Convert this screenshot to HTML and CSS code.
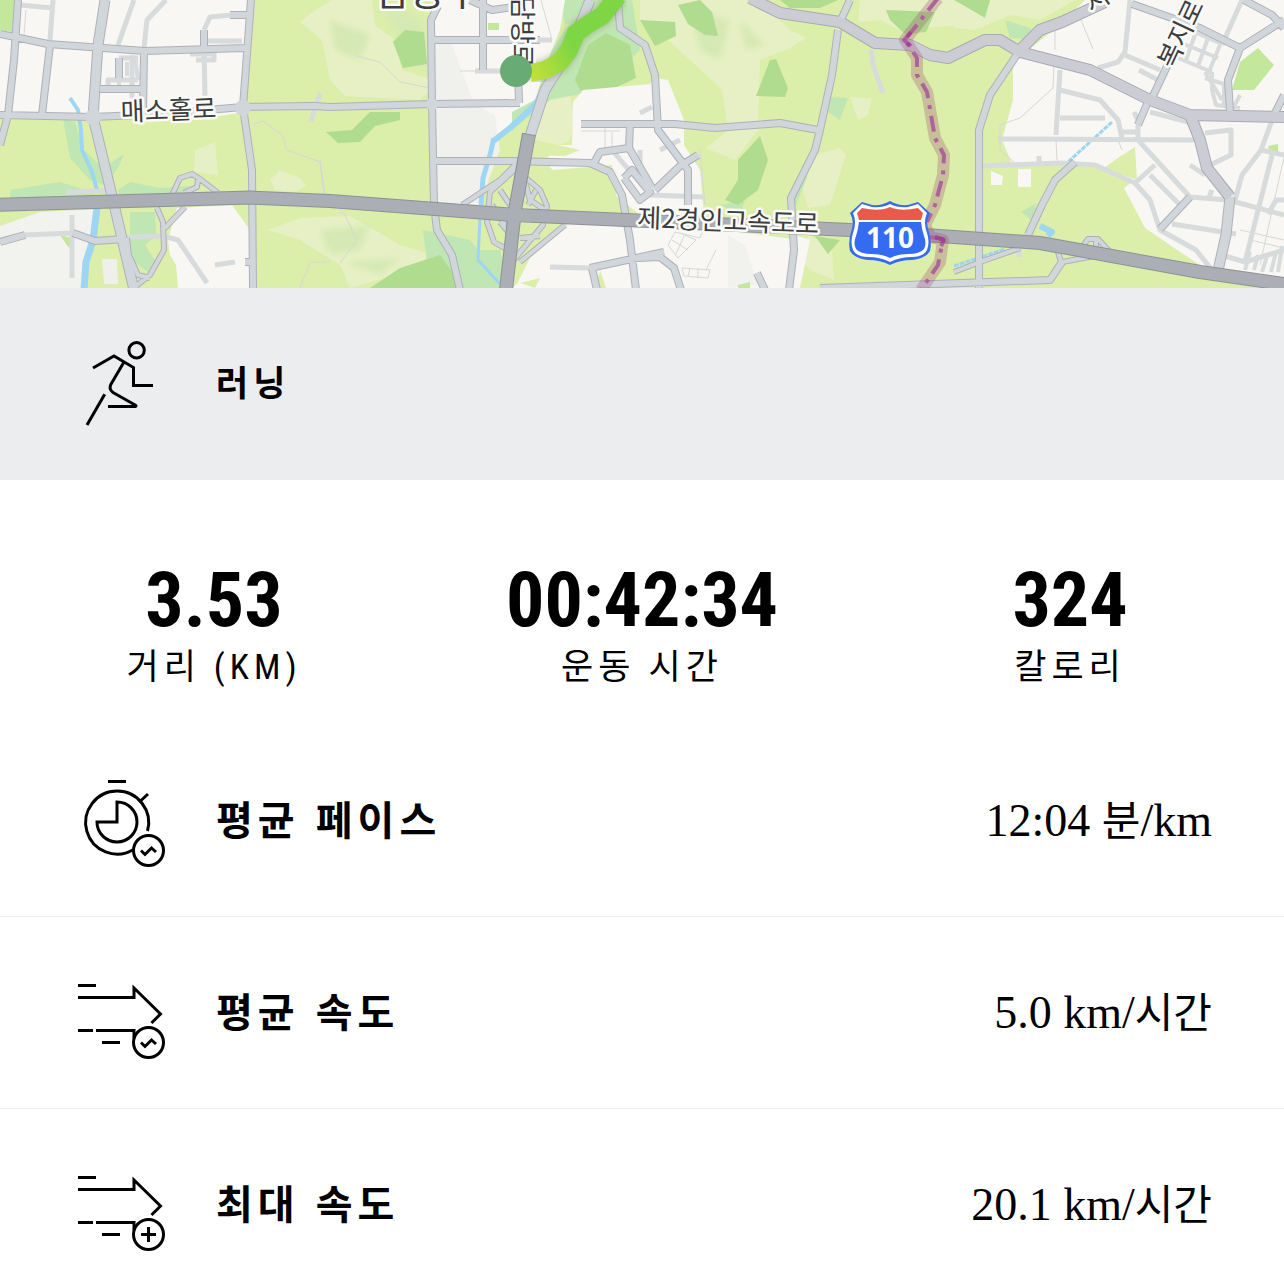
FILE: index.html
```html
<!DOCTYPE html>
<html lang="ko">
<head>
  <meta charset="UTF-8">
  <meta name="viewport" content="width=device-width, initial-scale=1.0">
  <title>러닝</title>
  <link rel="stylesheet" href="styles.css">
</head>
<body>
  <svg class="map" viewBox="0 0 1284 288" preserveAspectRatio="xMidYMid slice" role="img" aria-label="지도">
    <defs>
      <linearGradient id="route" gradientUnits="userSpaceOnUse" x1="530" y1="74" x2="574" y2="50">
        <stop offset="0" stop-color="#c3e03c"/>
        <stop offset="0.4" stop-color="#a9dc3c"/>
        <stop offset="1" stop-color="#7ed644"/>
      </linearGradient>
      <filter id="soft" x="-10%" y="-10%" width="120%" height="120%">
        <feGaussianBlur stdDeviation="3"/>
      </filter>
      <path id="streets" d="M0 34L48 44L145 51L245 48M18 0L14 60L8 115L0 145M50 45L42 115M0 115L93 117L160 114L243 107L315 106L330 107L432 104L520 103M251 0L243 107L252 170L253 288M144 51L143 112M100 89L142 89M0 242L25 235M73 233L95 241L125 239M230 15L247 15M204 30L204 50M119 58L119 78M245 262L252 262
        M438 6L431 20L432 104L434 205L437 230L452 255L460 290M434 40L540 40M483 0L483 70M470 0L492 10L520 6M518 71L519 103M434 161L512 161L590 163L610 172L622 195L630 240L636 290M581 124L665 124M665 124L675 124L715 128L780 123L818 130M630 124L629 148L600 152L594 163M629 148L652 188M618 0L620 28L645 45L655 75L658 130L688 170L688 205M655 190L680 166L698 155M624 178L632 170L650 192L640 200L624 178
        M590 268L650 255L664 252M592 268L597 290M638 258L660 257L674 268L681 290M838 30L832 75L820 130L815 150L791 198L794 250L789 290M757 273L765 290M820 288L1050 280L1062 262M850 0L840 22
        M1020 50L990 95L979 130L979 290M1075 162L1055 180L1042 205L1028 235M1132 4L1200 28L1240 48L1284 20M1240 48L1228 80L1230 112M1170 60L1152 98M1147 104L1138 125M1284 95L1274 115M1190 197L1160 229M1244 0L1272 15L1284 28"/>
      <path id="lanes" d="M20 5L52 8M53 0L50 40M134 0L118 45M166 0L147 20L144 48M204 48L205 98M204 30L210 17L232 15M208 41L242 41M190 54L214 54L214 60L196 60M132 55L132 98M119 58L138 58M108 88L108 80L138 80M25 235L73 233M72 215L72 278M127 237L163 236L178 240L207 283M215 265L235 262M320 93L311 121M66 192L108 191
        M475 71L518 71M525 40L552 40M550 267L590 268M640 113L652 107M612 150L650 195L704 197M871 50L873 65L883 93M640 170L640 150M660 150L680 140
        M982 166L1060 163L1095 165L1135 183L1150 200L1160 230L1196 250L1216 275M998 139L1200 140M1060 70L1056 135M1060 90L1100 100L1118 120L1122 138M1060 118L1105 118M1130 0L1125 52L1118 62L1098 68M1136 6L1200 28M1242 0L1222 45M1138 125L1138 140L1190 197L1228 200L1284 215M1172 224L1236 234M1150 175L1184 209M1136 182L1155 165M1125 55L1160 70M1205 133L1231 130L1231 155L1210 165M1150 112L1200 125M1265 115L1274 115L1261 150L1242 175L1235 200M1261 150L1284 155M1272 155L1245 262M1284 200L1276 200L1268 214M1190 165L1205 175M1139 70L1158 80M1122 132L1138 132M1134 112L1140 125M1039 156L1039 165M1019 248L1019 257M1225 256L1245 262L1284 250M1212 190L1208 200"/>
      <path id="blocks" d="M1190 30L1222 44M1184 44L1218 58M1178 58L1212 72M1196 32L1186 60M1208 38L1198 66M1220 45L1208 74M1205 72L1222 100M1212 72L1212 90L1216 105L1240 108M1240 95L1232 110M1250 252L1245 270M1258 255L1254 270M1267 256L1262 272M1276 252L1271 272M1282 246L1278 272M1205 78L1224 84L1224 108M119 60L119 85M135 57L138 80M127 62L127 76"/>
      <path id="ramps" d="M157 208L163 222L164 250L150 275L136 286M185 207L165 228M172 195L180 178L192 174L200 179L218 193M198 180L197 187L184 193M127 238L129 255L138 275L150 278
        M462 205L500 180L520 160M520 165L490 192L487 222L494 242L508 250M500 190L510 205M492 205L505 225M526 178L540 190L547 206L543 225L512 262M536 190L528 205M526 185L530 200L545 210M565 225L520 262M500 222L515 240M520 238L540 236
        M1062 262L1100 255M1058 252L1062 265M1080 250L1088 239L1098 239L1110 252M1096 240L1096 250M954 272L980 262L1020 248"/>
      <path id="mains" d="M750 -2L780 13L840 22L875 43L910 45L930 55L948 58L985 40L1000 40L1020 52L1090 70L1150 100L1190 115L1284 117M1020 50L1040 30L1062 22L1105 2M1190 115L1200 140L1207 168L1230 197"/>
      <path id="trunks" d="M105 0L98 45L93 117L113 200L134 290M590 0L582 20L565 58L545 90L530 136M1230 197L1226 235L1217 275"/>
      <path id="highway" d="M-5 205L250 197.500L330 201L515 215L850 230L954 237L1040 243L1200 272L1290 285"/>
    </defs>

    <rect width="1284" height="288" fill="#dbeeaa"/>

    <!-- hills -->
    <g fill="#e7f0c4">
      <path d="M300 22L315 10L332 0L372 0L375 25L395 40L402 70L440 82L420 100L345 96L330 80L322 40Z"/>
      <path d="M270 180L280 170L300 178L306 185L296 192L275 190Z"/>
      <path d="M268 230L300 218L350 216L400 245L434 255L420 268L360 285L350 288L340 265L300 240Z"/>
      <path d="M195 150L215 142L218 175L194 172Z"/>
      <path d="M540 92L570 95L574 120L570 140L545 152L534 140Z"/>
      <path d="M640 0L760 0L790 30L806 38L790 48L760 60L758 130L735 160L706 148L728 130L722 90L690 60L668 40L640 20Z"/>
      <path d="M815 155L840 148L846 155L830 205L808 208L800 180Z"/>
      <path d="M850 97L872 98L868 115L858 120Z"/>
      <path d="M860 0L960 0L962 25L900 30L880 20L858 22Z"/>
      <path d="M810 235L832 250L834 280L810 270L792 250Z"/>
      <path d="M954 0L1075 0L1040 20L1010 15L975 30L954 28Z"/>
    </g>
    <g fill="#d5e9b4" filter="url(#soft)">
      <path d="M330 20L370 35L360 60L335 50ZM380 0L420 20L432 70L410 60ZM690 10L730 20L720 60L700 50Z"/>
      <path d="M320 230L370 225L360 250L330 255ZM345 262L400 258L380 275ZM740 20L765 45L745 50Z"/>
    </g>

    <!-- woods -->
    <g fill="#c0e6b3">
      <path d="M63 118L75 122L84 150L103 168L124 154L118 168L105 185L90 180L70 158Z"/>
      <path d="M10 190L60 182L92 192L100 198L10 198ZM118 190L130 182L160 188L190 186L170 202L120 200Z"/>
      <path d="M130 212L155 212L156 235L145 245L156 262L148 272L134 262L130 245Z"/>
      <path d="M423 230L470 240L478 250L500 250L510 288L430 288Z"/>
      <path d="M565 30L590 0L632 0L640 50L600 90L550 100L512 130L512 112Z"/>
      <path d="M560 0L585 0L578 20L565 25ZM828 97L848 98L840 120L828 112ZM808 175L796 205L792 195ZM1005 20L1030 28L1040 40L1010 38Z"/>
      <path d="M1021 212L1036 203L1034 222ZM720 205L745 200L740 215Z"/>
    </g>
    <g fill="#b0dc8f">
      <path d="M393 42L405 30L424 32L427 64L403 68Z"/>
      <path d="M326 132L352 130L370 112L400 112L400 120L375 126L360 142L338 143Z"/>
      <path d="M370 288L400 268L440 255L458 280L460 288Z"/>
      <path d="M575 80L588 45L606 33L630 45L636 78L600 95L580 90Z"/>
      <path d="M678 5L700 0L712 12L718 36L705 35L688 24ZM640 20L675 22L676 36L655 46Z"/>
      <path d="M770 60L776 59L788 88L785 97L756 96ZM738 160L760 136L768 160L758 190L738 205L725 200L738 180Z"/>
      <path d="M780 0L838 0L820 8L790 8ZM886 10L935 12L926 32L905 34L890 20ZM954 0L990 0L985 18L975 12ZM815 236L840 240L828 254Z"/>
    </g>

    <!-- built-up land -->
    <g fill="#f8f7f3">
      <path d="M0 0L251 0L246 112L205 118L150 119L93 119L75 112L72 95L85 80L95 82L95 115L0 117Z"/>
      <path d="M0 226L40 212L96 209L92 250L82 288L0 288Z" fill="#f2f2ee"/>
      <path d="M177 208L232 205L250 230L251 288L178 288L176 265L170 255L168 240Z"/>
      <path d="M102 259L117 259L118 284L104 284Z" fill="#f0f0ea"/>
      <path d="M434 0L565 0L560 30L548 60L535 100L512 112L512 128L486 150L482 205L434 203Z"/>
      <path d="M434 40L450 40L474 103L495 115L500 150L480 203L434 203Z" fill="#f0f1ed"/>
      <path d="M583 90L650 84L654 78L668 80L684 120L684 145L700 170L704 215L640 215L615 195L612 168L560 180L545 160L560 145L572 145L573 102Z"/>
      <path d="M570 222L640 226L740 232L800 240L797 288L515 288L530 258Z"/>
      <path d="M728 235L745 245L758 285L728 288Z" fill="#f1f1ed"/>
      <path d="M1013 62L1060 25L1085 0L1284 0L1284 278L1204 268L1170 245L1145 228L1124 188L1132 182L1095 166L1012 164L1002 140L1013 100Z"/>
      <path d="M991 171L1003 176L1002 185L991 185ZM1018 169L1031 169L1031 187L1018 187Z"/>
      <path d="M795 235L810 240L800 288L785 288ZM512 288L540 265L560 288Z"/>
    </g>
    <g fill="#dbeeaa">
      <path d="M530 172L612 165L618 208L555 207Z"/>
      <path d="M1135 147L1137 180L1104 168L1118 158Z"/>
      <path d="M535 140L580 150L565 156L535 155Z"/>
      <path d="M600 270L606 288L596 288ZM520 283L540 278L535 288Z"/>
    </g>
    <g fill="#c3e79b">
      <path d="M0 0L15 0L12 32L0 30ZM1258 48L1274 65L1254 90L1232 90L1240 62Z"/>
      <path d="M60 235L72 238L69 248ZM488 23L499 23L499 30L488 30ZM1268 146L1278 144L1278 152L1270 153ZM738 285L750 282L750 288L738 288Z"/>
    </g>

    <!-- water -->
    <g fill="none" stroke="#9dd6f3" stroke-linejoin="round">
      <path d="M70 98L78 110L81 130L82 150L92 172L97 190" stroke-width="4"/>
      <path d="M97 208L93 240L86 262L84 290" stroke-width="7"/>
      <path d="M552 76L535 105L510 128L492 142" stroke-width="6"/>
      <path d="M494 138L490 155L483 178L481 205" stroke-width="5"/>
      <path d="M480 218L478 260L500 284" stroke-width="3"/>
      <path d="M1112 122L1068 162M954 266L1005 249" stroke-width="3" stroke-dasharray="5 1"/>
      <path d="M1040 226L1052 232L1048 236" stroke-width="6"/>
    </g>

    <!-- footpaths and tracks -->
    <g fill="none" stroke="#d5d8d8" stroke-width="1">
      <path d="M253 125L263 121L282 135L287 150L320 162L324 195M300 288L310 262L330 262M357 56L380 62L400 82L430 88M320 160L325 195L345 215L357 240L340 263M26 10L24 35M541 0L552 40M605 125L605 148M612 132L612 148M581 131L620 131M460 71L475 71"/>
      <path d="M1054 65L1053 88L1020 118L1000 125L1000 150L1015 163M1055 20L1055 50M1081 20L1093 49M1056 140L1057 160M1118 140L1122 150M1284 157L1260 265M1250 240L1284 248M1240 230L1284 240M700 150L705 205"/>
      <path d="M668 245L675 232L700 238L704 228M668 245L678 258L696 240L680 233M672 240L688 250M684 236L676 254M682 268L710 270L708 278L684 276ZM690 268L688 277M698 268L698 278M706 270L716 250"/>
    </g>

    <!-- roads -->
    <g fill="none" stroke-linejoin="round">
      <use href="#lanes" stroke="#d7dbdc" stroke-width="5"/>
      <use href="#blocks" stroke="#d7dbdc" stroke-width="4"/>
      <use href="#ramps" stroke="#adb1ba" stroke-width="6"/>
      <use href="#streets" stroke="#adb1ba" stroke-width="8"/>
      <use href="#trunks" stroke="#adb1ba" stroke-width="11"/>
      <use href="#mains" stroke="#a9aab5" stroke-width="12"/>
      <use href="#ramps" stroke="#d2d5da" stroke-width="4"/>
      <use href="#streets" stroke="#d1d6da" stroke-width="6"/>
      <use href="#trunks" stroke="#d1d6da" stroke-width="9"/>
      <use href="#mains" stroke="#cccdd4" stroke-width="10"/>
      <g fill="#d1d6da" stroke="none">
        <circle cx="93" cy="117" r="8"/>
        <circle cx="243" cy="108" r="8"/>
        <circle cx="432" cy="104" r="6"/>
      </g>
      <path d="M529 134L515 210L506 290" stroke="#8d9198" stroke-width="14"/>
      <use href="#highway" stroke="#8d9198" stroke-width="14"/>
      <path d="M529 135L515 210L506 290M500 214L530 216" stroke="#abaeb4" stroke-width="12"/>
      <use href="#highway" stroke="#abaeb4" stroke-width="12"/>
    </g>

    <!-- district border -->
    <g fill="none" stroke-linejoin="round">
      <path d="M938 -2L905 40L917 58L917 75L927 92L935 138L944 155L943 175L935 205L925 225L930 237L943 240L940 262L921 290" stroke="#9b4f78" stroke-opacity="0.3" stroke-width="12"/>
      <path d="M938 -2L905 40L917 58L917 75L927 92L935 138L944 155L943 175L935 205L927 222M930 237L943 239L938 265L921 290" stroke="#ad6599" stroke-width="4" stroke-dasharray="16 7 4 7"/>
      <path d="M911 32L904 40L911 46M935 237L944 240L941 246" stroke="#9c2b91" stroke-opacity="0.6" stroke-width="4"/>
    </g>

    <!-- route -->
    <path d="M530 74L545 70L560 62L569 50L576 33L590 23L602 16L618 -4" fill="none" stroke="#6d7d55" stroke-opacity="0.4" stroke-width="20" filter="url(#soft)"/>

    <g class="map-label">
      <text x="375" y="5" font-size="38">남동구</text>
      <text x="121" y="121" font-size="26" transform="rotate(-2 121 121)">매소홀로</text>
      <text x="637" y="227" font-size="26" transform="rotate(2 637 227)">제2경인고속도로</text>
      <text x="513" y="-4" font-size="26" transform="rotate(90 513 -4)">담방로</text>
      <text x="1174" y="70" font-size="26" transform="rotate(-65 1174 70)">복지로</text>
      <text x="1092" y="14" font-size="26" transform="rotate(-35 1092 14)">서</text>
    </g>

    <path d="M530 73L545 70L560 62L569 50L576 33L590 23L602 16L618 -4" fill="none" stroke="url(#route)" stroke-width="18" stroke-linejoin="round"/>
    <circle cx="516" cy="71" r="16" fill="#68ab75"/>

    <!-- route 110 shield -->
    <path d="M862 202L872 205Q882 206 890 201Q898 206 908 205L918 202L930 213Q925 222 929 232Q932 242 930 251Q925 259 912 260Q900 260 890 265Q880 260 868 260Q855 259 850 251Q848 242 851 232Q855 222 850 213Z" fill="#346bf0"/>
    <path d="M862 204L872 207Q882 208 890 204Q898 208 908 207L918 204L927 213Q923 222 927 233Q930 242 927 250Q923 257 912 257Q900 257 890 262Q880 257 868 257Q857 257 853 250Q850 242 853 233Q857 222 853 213Z" fill="#fff"/>
    <path d="M859 222H921Q922 230 924 236Q927 244 924 249Q920 254 908 254Q898 254 890 258Q882 254 872 254Q860 254 856 249Q853 244 856 236Q858 230 859 222Z" fill="#346bf0"/>
    <path d="M857 213L862 208Q880 212 890 207Q900 212 918 208L923 213L921 220H859Z" fill="#e95a4b"/>
    <text class="shield" x="890" y="248" text-anchor="middle">110</text>
  </svg>

  <header class="row activity">
    <svg class="icon" viewBox="0 0 96 96" aria-hidden="true">
      <circle cx="64.600" cy="14.300" r="7.700"/>
      <path d="M21 32L42 20L61.500 31.500V49.500H81"/>
      <path d="M51.700 26.500L38.800 48.500Q36.500 53 41 56.500L64 69.500V70.500H36" stroke-linejoin="bevel"/>
      <path d="M32.700 58.300L15 89"/>
    </svg>
    <h1 class="activity-name">러닝</h1>
  </header>

  <main>
    <dl class="stats">
      <div class="stat">
        <dd class="number">3.53</dd>
        <dt class="caption">거리 (KM)</dt>
      </div>
      <div class="stat">
        <dd class="number">00:42:34</dd>
        <dt class="caption">운동 시간</dt>
      </div>
      <div class="stat">
        <dd class="number">324</dd>
        <dt class="caption">칼로리</dt>
      </div>
    </dl>

    <ul class="details">
      <li class="row">
        <svg class="icon" viewBox="0 0 96 96" aria-hidden="true">
          <path d="M36 8.500H54M68.500 28L76 21"/>
          <path d="M61.500 76.500A31.500 31.500 0 1 1 75.500 58"/>
          <path d="M45 49V29A20 20 0 1 1 25 49Z"/>
          <circle cx="76.500" cy="77.500" r="15"/>
          <path d="M69 77.500L73 81.500L79.500 75L84 79"/>
        </svg>
        <span class="name">평균 페이스</span>
        <span class="value">12:04 <span class="unit">분</span>/km</span>
      </li>
      <li class="row">
        <svg class="icon" viewBox="0 0 96 96" aria-hidden="true">
          <path d="M6 20.500H24M6 65.500H21M30 77.500H48"/>
          <path d="M6 32.500H62V23L88.500 49L79.500 58"/>
          <path d="M24 65.500H62V73"/>
          <circle cx="76.500" cy="77.500" r="15"/>
          <path d="M69 77.500L73 81.500L79.500 75L84 79"/>
        </svg>
        <span class="name">평균 속도</span>
        <span class="value">5.0 km/<span class="unit">시간</span></span>
      </li>
      <li class="row">
        <svg class="icon" viewBox="0 0 96 96" aria-hidden="true">
          <path d="M6 20.500H24M6 65.500H21M30 77.500H48"/>
          <path d="M6 32.500H62V23L88.500 49L79.500 58"/>
          <path d="M24 65.500H62V73"/>
          <circle cx="76.500" cy="77.500" r="15"/>
          <path d="M69 77.500H84M76.500 70V85"/>
        </svg>
        <span class="name">최대 속도</span>
        <span class="value">20.1 km/<span class="unit">시간</span></span>
      </li>
    </ul>
  </main>
</body>
</html>
```
FILE: styles.css
```css
* {
  box-sizing: border-box;
  padding: 0;
  margin: 0;
}
body {
  background: #fff;
  color: #000;
  font-family: 'Liberation Sans', 'Noto Sans CJK KR', sans-serif;
}

.map {
  display: block;
  width: 100%;
  height: 288px;
}
.map-label {
  fill: #3c3d41;
  stroke: #fafaf6;
  stroke-width: 5px;
  stroke-linejoin: round;
  paint-order: stroke;
  font-family: 'Noto Sans CJK KR', sans-serif;
  font-weight: 400;
}
.shield {
  fill: #fff;
  font-family: 'Noto Sans', sans-serif;
  font-size: 28px;
  font-weight: 700;
}

.row {
  display: flex;
  align-items: center;
  gap: 48px;
  padding: 48px 72px 47px;
  border-bottom: 1px solid #ececee;
}
.activity {
  border-color: #ecedef;
  background: #ecedef;
}
.icon {
  flex: none;
  width: 96px;
  height: 96px;
  fill: none;
  stroke: #000;
  stroke-width: 3px;
}
.activity-name,
.name {
  padding-bottom: 6px;
  font-family: 'Noto Sans CJK KR', sans-serif;
  font-weight: 700;
  line-height: 48px;
  letter-spacing: 5px;
}
.activity-name {
  font-size: 35px;
}
.name {
  font-size: 40px;
}
.value {
  margin-left: auto;
  font-family: 'Liberation Serif', 'Noto Sans CJK KR', serif;
  font-size: 46px;
  line-height: 48px;
}
.unit {
  font-size: 42px;
}

.stats {
  display: grid;
  grid-template-columns: repeat(3, 1fr);
  padding: 80px 0 33px;
  text-align: center;
}
.number {
  margin-bottom: 4px;
  font-family: 'Roboto Condensed', 'Liberation Sans', sans-serif;
  font-size: 76px;
  font-weight: 700;
  line-height: 80px;
}
.caption {
  font-family: 'Roboto Condensed', 'Noto Sans CJK KR', sans-serif;
  font-size: 35px;
  line-height: 48px;
  letter-spacing: 5px;
}

.details {
  list-style: none;
}
.details .row:last-child {
  padding-bottom: 0;
  border-bottom: none;
}
```
